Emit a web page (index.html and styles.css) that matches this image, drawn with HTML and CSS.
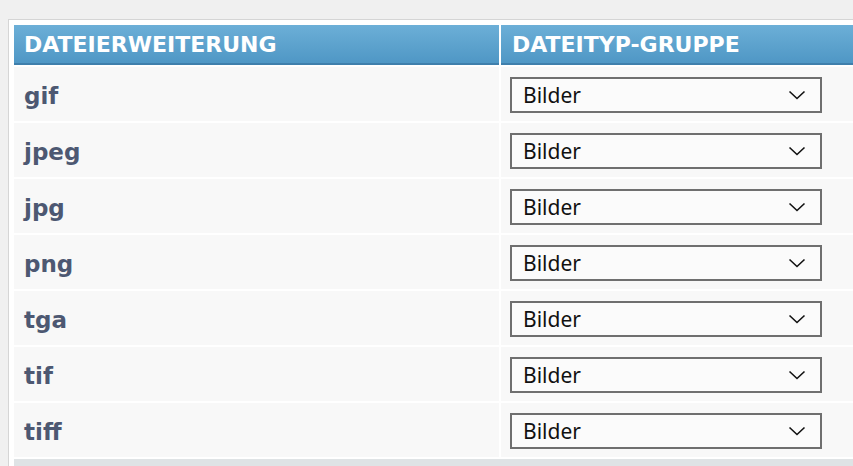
FILE: index.html
```html
<!DOCTYPE html>
<html lang="de">
<head>
  <meta charset="UTF-8" />
  <title>Dateitypen</title>
  <link rel="stylesheet" href="styles.css">
</head>
<body>

<div class="panel">
  <table class="filetypes">
    <thead>
      <tr>
        <th class="col-ext">Dateierweiterung</th>
        <th class="col-group">Dateityp-Gruppe</th>
      </tr>
    </thead>
    <tbody>
      <tr><td class="ext">gif</td><td><div class="select-box"><span>Bilder</span><svg class="chevron" width="18" height="10" viewBox="0 0 18 10"><path d="M1.5 1.5 L9 8.5 L16.5 1.5" fill="none" stroke="#111" stroke-width="1.6"/></svg></div></td></tr>
      <tr><td class="ext">jpeg</td><td><div class="select-box"><span>Bilder</span><svg class="chevron" width="18" height="10" viewBox="0 0 18 10"><path d="M1.5 1.5 L9 8.5 L16.5 1.5" fill="none" stroke="#111" stroke-width="1.6"/></svg></div></td></tr>
      <tr><td class="ext">jpg</td><td><div class="select-box"><span>Bilder</span><svg class="chevron" width="18" height="10" viewBox="0 0 18 10"><path d="M1.5 1.5 L9 8.5 L16.5 1.5" fill="none" stroke="#111" stroke-width="1.6"/></svg></div></td></tr>
      <tr><td class="ext">png</td><td><div class="select-box"><span>Bilder</span><svg class="chevron" width="18" height="10" viewBox="0 0 18 10"><path d="M1.5 1.5 L9 8.5 L16.5 1.5" fill="none" stroke="#111" stroke-width="1.6"/></svg></div></td></tr>
      <tr><td class="ext">tga</td><td><div class="select-box"><span>Bilder</span><svg class="chevron" width="18" height="10" viewBox="0 0 18 10"><path d="M1.5 1.5 L9 8.5 L16.5 1.5" fill="none" stroke="#111" stroke-width="1.6"/></svg></div></td></tr>
      <tr><td class="ext">tif</td><td><div class="select-box"><span>Bilder</span><svg class="chevron" width="18" height="10" viewBox="0 0 18 10"><path d="M1.5 1.5 L9 8.5 L16.5 1.5" fill="none" stroke="#111" stroke-width="1.6"/></svg></div></td></tr>
      <tr><td class="ext">tiff</td><td><div class="select-box"><span>Bilder</span><svg class="chevron" width="18" height="10" viewBox="0 0 18 10"><path d="M1.5 1.5 L9 8.5 L16.5 1.5" fill="none" stroke="#111" stroke-width="1.6"/></svg></div></td></tr>
    </tbody>
    <tfoot>
      <tr><td colspan="2" class="foot"></td></tr>
    </tfoot>
  </table>
</div>

</body>
</html>
```

FILE: styles.css
```css
* { box-sizing: border-box; }
body {
  margin: 0;
  padding: 19px 0 0 8px;
  background: #f0f0f0;
  font-family: 'DejaVu Sans', Verdana, sans-serif;
  overflow: hidden;
}
.panel {
  width: 1000px;
  background: #fff;
  border: 1px solid #d5d5d5;
  padding: 3px;
}
.filetypes {
  width: 100%;
  border-collapse: separate;
  border-spacing: 2px;
}
.filetypes th {
  height: 40px;
  padding: 0 10px;
  text-align: left;
  text-transform: uppercase;
  font-size: 22px;
  font-weight: bold;
  color: #fff;
  background: linear-gradient(#6cafd7, #4f97c5);
  border-bottom: 2px solid #3f7fac;
  vertical-align: middle;
}
.filetypes .col-ext { width: 485px; }
.filetypes .col-group { padding-left: 11px; }
.filetypes td {
  height: 54px;
  padding: 0 9px;
  background: #f8f8f8;
  vertical-align: middle;
}
.filetypes td.ext {
  padding: 4px 0 0 10px;
  font-size: 23px;
  font-weight: bold;
  color: #4d5872;
}
.select-box {
  width: 312px;
  height: 36px;
  margin-top: 2px;
  border: 2px solid #6f6f6f;
  background: #fbfbfb;
  display: flex;
  align-items: center;
  justify-content: space-between;
  padding: 0 14px 0 11px;
  font-family: 'Noto Sans', 'Open Sans', sans-serif;
  font-size: 21px;
  color: #111;
}
.chevron { display: block; }
.filetypes td.foot {
  height: 20px;
  background: #dfe3e5;
}
```
